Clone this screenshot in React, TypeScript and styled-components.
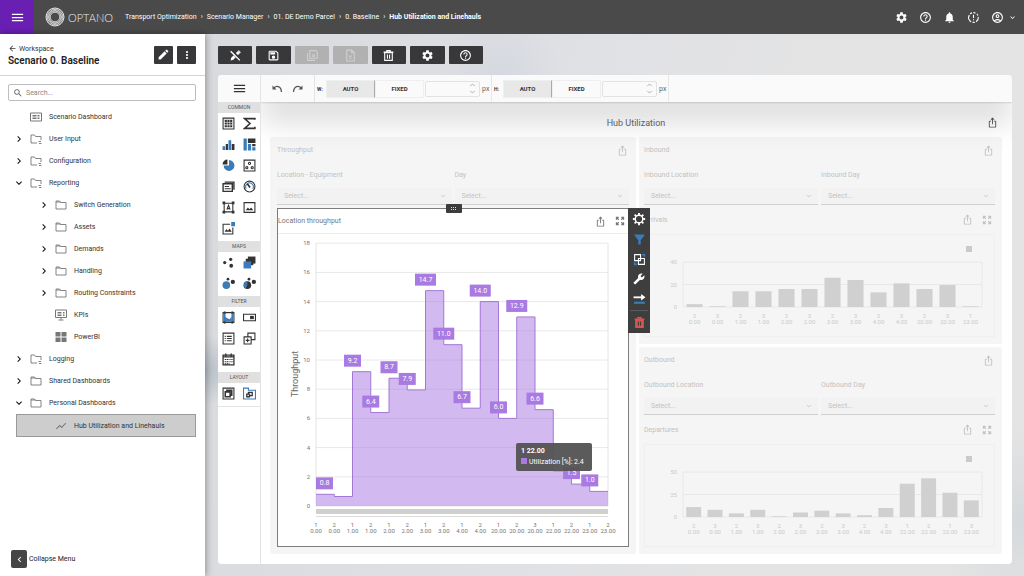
import React from "react";
import styled, { createGlobalStyle, css } from "styled-components";
import {
  MdArrowBack, MdChevronRight, MdEdit, MdExpandMore, MdHelpOutline, MdMenu, MdMoreVert,
  MdNotifications, MdOutlineAccountCircle, MdOutlineSave, MdSearch, MdSettings, MdShowChart,
  MdChevronLeft, MdOutlineIosShare, MdBuild, MdFilterAlt,
} from "react-icons/md";

const color = {
  bar: "#4a4a4a",
  dark: "#38383a",
  brand: "#6a1fb3",
  ink: "#333333",
  blue: "#3b7bb8",
  violet: "#a97be2",
  danger: "#d9534f",
};

const font = { tiny: "5px", small: "6px", base: "7px", head: "9px", title: "10px" };

const GlobalStyle = createGlobalStyle`
  *, *::before, *::after { box-sizing: border-box; }
  body { margin: 0; font-family: Roboto, "Liberation Sans", sans-serif; font-size: ${font.base}; color: ${color.ink}; }
  button, input, select { font: inherit; color: inherit; margin: 0; padding: 0; border: 0; background: none; }
  button { display: inline-flex; align-items: center; justify-content: center; cursor: pointer; }
  a { color: inherit; text-decoration: none; }
  ul, ol { list-style: none; margin: 0; padding: 0; }
  h1, h2, h3 { margin: 0; font-weight: 400; }
  svg { display: block; flex: none; }
`;

/* ---------- page frame ---------- */

const Page = styled.div`
  display: flex;
  flex-direction: column;
  min-height: 100vh;
`;

const Header = styled.header`
  display: flex;
  align-items: center;
  height: 34px;
  background: ${color.bar};
  color: #fff;
`;

const MenuButton = styled.button`
  width: 34px;
  height: 34px;
  background: ${color.brand};
`;

const Brand = styled.a`
  display: flex;
  align-items: center;
  gap: 3px;
  margin-left: 11px;
  width: 80px;
  font-family: Lato, sans-serif;
  font-size: 11px;
  font-weight: 300;
  color: #ececec;
`;

const Crumbs = styled.nav`
  color: #fff;
  ol { display: flex; gap: 4px; }
  li { display: flex; gap: 4px; white-space: nowrap; }
`;

const HeaderActions = styled.div`
  display: flex;
  align-items: center;
  gap: 11px;
  margin-left: auto;
  padding-right: 7px;
`;

const Account = styled.button`
  gap: 4px;
`;

const Body = styled.div`
  display: flex;
  flex: 1;
`;

/* ---------- sidebar ---------- */

const Sidebar = styled.aside`
  position: relative;
  z-index: 1;
  display: flex;
  flex-direction: column;
  width: 205px;
  flex: none;
  background: #fff;
  box-shadow: 1px 0 7px rgba(0, 0, 0, 0.35);
`;

const SideHead = styled.div`
  display: flex;
  align-items: center;
  gap: 4px;
  height: 42px;
  padding: 0 9px 0 8px;
  border-bottom: 1px solid #d4d4d4;
`;

const SideTitle = styled.div`
  display: flex;
  flex-direction: column;
  gap: 1px;
  margin-right: auto;
  padding-top: 1px;
  h1 { font-size: ${font.title}; line-height: 12px; font-weight: 600; color: #222; }
  a { display: flex; align-items: center; gap: 2px; line-height: 10px; }
`;

const SquareButton = styled.button`
  width: 19px;
  height: 18px;
  border-radius: 1px;
  background: ${color.dark};
  color: #fff;
`;

const Search = styled.label`
  display: flex;
  align-items: center;
  gap: 3px;
  height: 17px;
  margin: 8px 9px 5px 8px;
  padding: 0 4px;
  border: 1px solid #bdbdbd;
  border-radius: 2px;
  color: #666;
  input { flex: 1; min-width: 0; outline: 0; }
  input::placeholder { color: #888; opacity: 1; }
`;

const TreeRow = styled.a<{ $level: number; $active?: boolean }>`
  display: flex;
  align-items: center;
  height: 22px;
  padding-left: ${(p) => 13 + 25 * p.$level}px;
  color: #333;
  ${(p) =>
    p.$active &&
    css`
      height: 23px;
      margin: 0 9px 0 16px;
      padding-left: 21px;
      background: #cdcdcd;
      border: 1px solid #999;
    `}
`;

const TreeArrow = styled.span`
  width: 12px;
  margin-right: 5px;
  color: #111;
`;

const TreeIcon = styled.span`
  width: 12px;
  margin-right: 7px;
  color: #777;
`;

const Collapse = styled.button`
  align-self: flex-start;
  gap: 2px;
  margin: auto 0 8px 11px;
  color: #222;
`;

const CollapseIcon = styled.span`
  display: grid;
  place-items: center;
  width: 16px;
  height: 18px;
  border-radius: 2px;
  background: #454545;
  color: #fff;
`;

/* ---------- workspace ---------- */

const Main = styled.main`
  display: flex;
  flex: 1;
  flex-direction: column;
  gap: 11px;
  min-width: 0;
  padding: 12px 12px 12px 13px;
  background:
    radial-gradient(circle at 0% 62%, rgba(150, 165, 180, 0.55), transparent 4%),
    radial-gradient(circle at 36% 8%, rgba(203, 209, 220, 0.5), transparent 9%),
    radial-gradient(circle at 100% 90%, rgba(200, 207, 212, 0.5), transparent 10%),
    linear-gradient(100deg, #d9dadd 0%, #e0e1e5 45%, #e4e4e4 70%);
`;

const ActionBar = styled.div`
  display: grid;
  grid-template-columns: repeat(7, 1fr);
  gap: 4px;
  width: 265px;
`;

const ActionButton = styled.button`
  height: 18px;
  border-radius: 1px;
  background: ${color.dark};
  color: #fff;
  &:disabled { background: #b1b1b2; color: #cfcfcf; cursor: default; }
`;

const Editor = styled.section`
  display: flex;
  flex: 1;
  border-radius: 4px;
  overflow: hidden;
  background: #fff;
`;

const Palette = styled.div`
  position: relative;
  z-index: 2;
  width: 43px;
  flex: none;
  background: #fff;
  border-right: 1px solid #e4e4e4;
`;

const PaletteToggle = styled.button`
  width: 100%;
  height: 27px;
  background: #fafafa;
`;

const PaletteTitle = styled.h2`
  height: 11px;
  background: #e0e0e0;
  color: #555;
  font-size: ${font.tiny};
  line-height: 11px;
  text-align: center;
`;

const PaletteGrid = styled.div`
  display: grid;
  grid-template-columns: 1fr 1fr;
  grid-auto-rows: 21px;
  padding-bottom: 2px;
`;

const PaletteEnd = styled.div`
  border-bottom: 1px solid #e4e4e4;
`;

const Work = styled.div`
  display: flex;
  flex: 1;
  flex-direction: column;
  min-width: 0;
`;

const SizeBar = styled.div`
  position: relative;
  z-index: 1;
  display: flex;
  align-items: stretch;
  height: 27px;
  background: #fafafa;
  border-radius: 0 4px 0 0;
  box-shadow: 0 1px 2px rgba(0, 0, 0, 0.14), 0 18px 30px rgba(0, 0, 0, 0.17);
`;

const History = styled.div`
  display: flex;
  align-items: center;
  gap: 9px;
  width: 54px;
  padding-left: 10px;
  border-right: 1px solid #e4e4e4;
  color: #555;
`;

const SizeField = styled.fieldset`
  display: flex;
  align-items: center;
  width: 177px;
  min-width: 0;
  margin: 0;
  padding: 0 0 0 2px;
  border: 0;
  border-right: 1px solid #e8e8e8;
  color: #666;
`;

const SizeName = styled.span`
  width: 9px;
  font-size: ${font.tiny};
  font-weight: 700;
  color: #333;
`;

const Mode = styled.button<{ $on?: boolean }>`
  width: 49px;
  height: 18px;
  font-size: ${font.small};
  font-weight: 700;
  color: #333;
  border: 1px solid #efefef;
  ${(p) => p.$on && css`background: #e8e8e8; border-right-color: #aaa;`}
`;

const NumberBox = styled.label`
  display: flex;
  align-items: center;
  gap: 2px;
  margin-left: 1px;
`;

const NumberFrame = styled.span`
  display: flex;
  align-items: center;
  width: 55px;
  height: 16px;
  padding-right: 1px;
  border: 1px solid #e2e2e2;
  border-radius: 2px;
  color: #999;
  input { flex: 1; min-width: 0; }
`;

const Canvas = styled.div`
  flex: 1;
  padding: 0 10px 8px 9px;
`;

const CanvasHead = styled.div`
  display: grid;
  grid-template-columns: 1fr auto 1fr;
  align-items: center;
  height: 35px;
  padding: 6px 4px 0;
  h2 { grid-column: 2; font-size: ${font.head}; color: #666; }
  button { justify-self: end; color: #555; }
`;

const Columns = styled.div`
  display: grid;
  grid-template-columns: 366fr 363fr;
  gap: 3px;
`;

const Column = styled.div`
  display: flex;
  flex-direction: column;
  gap: 3px;
  min-width: 0;
`;

const Group = styled.section<{ $left: number }>`
  padding: 0 7px 7px ${(p) => p.$left}px;
  background: #f5f5f5;
  color: #c2c2c2;
  border-radius: 2px;
`;

const GroupHead = styled.div`
  display: flex;
  align-items: center;
  justify-content: space-between;
  height: 26px;
  padding-right: 1px;
`;

const Filters = styled.div`
  display: grid;
  grid-template-columns: 1fr 1fr;
  gap: 3px;
`;

const Filter = styled.label`
  display: block;
  line-height: 25px;
`;

const SelectFrame = styled.span`
  display: flex;
  align-items: center;
  height: 17px;
  padding-right: 5px;
  background: #f2f2f2;
  border-bottom: 1px solid #cfcfcf;
  select { flex: 1; min-width: 0; appearance: none; padding-left: 7px; opacity: 1; }
`;

const ChartHead = styled.div`
  display: flex;
  align-items: center;
  height: 29px;
  padding-right: 3px;
  h3 { margin-right: auto; font-size: ${font.base}; }
`;

const ChartTools = styled.div`
  display: flex;
  align-items: center;
  gap: 9px;
`;

const ChartCard = styled.div`
  border: 1px solid #efefef;
  svg { width: 100%; height: auto; }
`;

const Widget = styled.section`
  position: relative;
  margin: 3px 0 0;
  background: #fff;
  border: 1px solid #7d7d7d;
  color: #777;
`;

const WidgetHead = styled(ChartHead)`
  height: 25px;
  border-bottom: 1px solid #ececec;
`;

const Grip = styled.button`
  position: absolute;
  top: -5px;
  left: 48%;
  width: 16px;
  height: 9px;
  border-radius: 1px;
  background: #3c3c3c;
`;

const WidgetTools = styled.div`
  position: absolute;
  top: -1px;
  left: 100%;
  z-index: 1;
  display: flex;
  flex-direction: column;
  width: 22px;
  padding: 1px 2px;
  background: #3e3e3e;
  color: #fff;
  button { height: 20px; }
  hr { width: 100%; margin: 1px 0; border: 0; border-top: 1px solid #5c5c5c; }
`;

const DangerTool = styled.button`
  color: ${color.danger};
`;

const Plot = styled.div`
  position: relative;
  > svg { width: 100%; height: auto; }
`;

const Tooltip = styled.div`
  position: absolute;
  top: 67%;
  left: 68%;
  padding: 3px 8px 3px 5px;
  border-radius: 2px;
  background: rgba(84, 84, 84, 0.96);
  color: #fff;
  line-height: 11px;
  white-space: nowrap;
`;

const Swatch = styled.i`
  display: inline-block;
  width: 6px;
  height: 6px;
  margin-right: 2px;
  background: ${color.violet};
`;

/* ---------- drawings ---------- */

type DrawProps = { size?: number; children: React.ReactNode };

const Draw = ({ size = 13, children }: DrawProps) => (
  <svg width={size} height={size} viewBox="0 0 24 24" fill="none" stroke="currentColor" strokeWidth={2} aria-hidden>
    {children}
  </svg>
);

const Logo = () => (
  <svg width="20" height="20" viewBox="0 0 40 40" fill="none" stroke="#e4e4e4" aria-hidden>
    <circle cx="20" cy="20" r="18" strokeWidth="2" />
    <circle cx="20" cy="20" r="15" strokeWidth="1.6" />
    <circle cx="20" cy="20" r="12.4" strokeWidth="1.6" />
    <circle cx="20" cy="20" r="9.6" strokeWidth="1.8" />
    {[0, 45, 90, 135].map((a) => (
      <ellipse key={a} cx="20" cy="20" rx="17.5" ry="11.5" strokeWidth="0.7" transform={`rotate(${a} 20 20)`} />
    ))}
  </svg>
);

const AlertRing = () => (
  <Draw>
    <circle cx="12" cy="12" r="9" strokeDasharray="10 2.5 4 2.5 4 2.5 4 2.5 10 2.5 4 2.5 4 2" transform="rotate(145 12 12)" />
    <path d="M12 7v6M12 15v2" />
  </Draw>
);

const Folder = ({ linked }: { linked?: boolean }) => (
  <Draw size={12}>
    {linked ? (
      <>
        <path d="M14 20H2V4h7l2 3h11v7" strokeWidth={1.8} />
        <path d="M17 17h5M18 21h5" strokeWidth={1.8} />
      </>
    ) : (
      <path d="M2 4h7l2 3h11v13H2zM2 6h9" strokeWidth={1.8} />
    )}
  </Draw>
);

const DashboardIcon = () => (
  <Draw size={12}>
    <path d="M1 4h22v16H1z" />
    <path d="M5 9h8M5 12h8M5 15h8M15 9h4M15 12h4M15 15h4" />
  </Draw>
);

const MonitorIcon = () => (
  <Draw size={12}>
    <path d="M1 2h22v15H1zM12 17v4M7 22h10" />
    <path d="M5 7h8M5 10h8M5 13h8M16 7h3M16 10h3M16 13h3" />
  </Draw>
);

const TilesIcon = () => (
  <Draw size={12}>
    <path d="M1 2h10v9H1zM13 2h10v9H13zM1 13h10v9H1zM13 13h10v9H13z" fill="currentColor" stroke="none" />
  </Draw>
);

const DesignOff = () => (
  <Draw>
    <path d="M3 21l1-5L16 4l4 4L8 20z" fill="currentColor" stroke="none" />
    <path d="M17 3l4 4" strokeWidth={2.6} />
    <path d="M4 3l17 17" stroke={color.dark} strokeWidth={6} />
    <path d="M3 4l17 17" strokeWidth={2.6} />
  </Draw>
);

const SaveCopy = () => (
  <Draw>
    <path d="M7 3h11l3 3v11H7zM3 7v14h14" />
    <circle cx="14" cy="12" r="2" />
  </Draw>
);

const FileX = () => (
  <Draw>
    <path d="M5 2h9l5 5v15H5zM14 2v5h5M9 12l5 6M14 12l-5 6" />
  </Draw>
);

const Bin = ({ filled }: { filled?: boolean }) => (
  <Draw>
    <path d="M3 6h18M9 5V3h6v2" strokeWidth={2.4} />
    <path d="M5 7h14v14H5z" fill={filled ? "currentColor" : "none"} />
    <path d="M10 10v8M14 10v8" stroke={filled ? "#3e3e3e" : "currentColor"} />
  </Draw>
);

const Expand = () => (
  <Draw size={10}>
    <path
      d="M2 2h7v3H7l3 3-2 2-3-3v2H2zM22 2v7h-3V7l-3 3-2-2 3-3h-2V2zM22 22h-7v-3h2l-3-3 2-2 3 3v-2h3zM2 22v-7h3v2l3-3 2 2-3 3h2v3z"
      fill="currentColor"
      stroke="none"
    />
  </Draw>
);

const Undo = ({ flip }: { flip?: boolean }) => (
  <Draw size={12}>
    <g transform={flip ? "matrix(-1 0 0 1 24 0)" : undefined}>
      <path d="M3 5v8h8z" fill="currentColor" stroke="none" />
      <path d="M6 10C10 5 20 5 21 18" strokeWidth={2.6} />
    </g>
  </Draw>
);

const GearOutline = () => (
  <Draw size={14}>
    <circle cx="12" cy="12" r="6.5" strokeWidth={2.4} />
    {[0, 45, 90, 135, 180, 225, 270, 315].map((a) => (
      <path key={a} d="M12 1.5v3.5" strokeWidth={3.2} transform={`rotate(${a} 12 12)`} />
    ))}
  </Draw>
);

const CopyTool = () => (
  <Draw>
    <path d="M3 3h11v11H3zM10 10h11v11H10z" />
    <path d="M17 3h4v4M3 17v4h4" stroke={color.blue} strokeWidth={3} />
  </Draw>
);

const SwapTool = () => (
  <Draw>
    <path d="M1 8h16" strokeWidth={3.4} />
    <path d="M15 2l8 6-8 6z" fill="currentColor" stroke="none" />
    <path d="M2 18h20" stroke={color.blue} strokeWidth={4} />
  </Draw>
);

const b = color.blue;
const solid = { fill: "currentColor", stroke: "none" };
const blueFill = { fill: b, stroke: "none" };

type PaletteItem = { name: string; art: React.ReactNode };

const paletteSections: { title: string; items: PaletteItem[] }[] = [
  {
    title: "COMMON",
    items: [
      { name: "Table", art: <><path d="M2 2h20v20H2z" /><path d="M5 5h4v4H5zM10 5h4v4h-4zM15 5h4v4h-4zM5 10h4v4H5zM10 10h4v4h-4zM15 10h4v4h-4zM5 15h4v4H5zM10 15h4v4h-4zM15 15h4v4h-4z" {...solid} /></> },
      { name: "Sum", art: <path d="M22 5V3H3l10 9-10 9h19v-3" strokeWidth={2.8} /> },
      { name: "Bar chart", art: <><path d="M7 11h4v11H7zM18 11h5v11h-5z" {...solid} /><path d="M1 15h5v7H1zM12 4h5v18h-5z" {...blueFill} /></> },
      { name: "Tree map", art: <><path d="M9 1h14v8H9zM17 11h6v4h-6z" {...solid} /><path d="M1 1h6v22H1zM9 11h6v12H9zM17 17h6v6h-6z" {...blueFill} /></> },
      { name: "Pie chart", art: <><path d="M13 2a10 10 0 1 1-10 10h10z" {...blueFill} /><path d="M10 1v9H1a9 9 0 0 1 9-9z" {...solid} /></> },
      { name: "Scatter chart", art: <><path d="M2 2h20v20H2z" /><circle cx="7" cy="16" r="2" /><circle cx="12" cy="8" r="2" /><circle cx="17" cy="16" r="2" /></> },
      { name: "Cards", art: <><path d="M2 7h17v14H2zM5 4h17v14" strokeWidth={2.6} /><path d="M5 12h8M5 16h11" /></> },
      { name: "Gauge", art: <><circle cx="12" cy="12" r="10" /><path d="M6 16a7 7 0 1 1 12 0" stroke={b} /><path d="M8 7l5 7" strokeWidth={3} /></> },
      { name: "Text", art: <><path d="M4 4h16v16H4z" /><path d="M1 1h5v5H1zM18 1h5v5h-5zM1 18h5v5H1zM18 18h5v5h-5z" {...solid} /><path d="M9 16l3-8 3 8M10 14h4" /></> },
      { name: "Image", art: <><path d="M2 3h20v18H2z" /><path d="M5 17l4-5 3 3 3-3 4 5z" {...solid} /></> },
      { name: "Dynamic image", art: <><path d="M15 4H2v18h18V10" /><path d="M5 18l3-5 3 3 3-4 4 6z" {...solid} /><path d="M17 0h7v8h-7z" {...blueFill} /></> },
    ],
  },
  {
    title: "MAPS",
    items: [
      { name: "Points", art: <><circle cx="5" cy="12" r="3" {...solid} /><circle cx="16" cy="6" r="3" {...solid} /><circle cx="17" cy="18" r="3.5" {...solid} /></> },
      { name: "Layers", art: <><path d="M9 1h14v13H9z" {...solid} /><path d="M5 5h14v12H5z" {...solid} /><path d="M1 10h14v13H1z" {...blueFill} /></> },
      { name: "Bubbles", art: <><circle cx="8" cy="15" r="7" {...blueFill} /><circle cx="20" cy="9" r="4" {...solid} /><circle cx="11" cy="4" r="2.5" {...solid} /></> },
      { name: "Pie bubbles", art: <><circle cx="8" cy="15" r="7" {...solid} /><path d="M8 15V8a7 7 0 0 0-3 13z" {...blueFill} /><circle cx="20" cy="9" r="4" {...solid} /><circle cx="11" cy="4" r="2.5" {...solid} /></> },
    ],
  },
  {
    title: "FILTER",
    items: [
      { name: "Range filter", art: <><path d="M2 3h20v18H2z" /><path d="M5 20V10l4 3 5 2 4-5v10z" {...blueFill} /><path d="M5 1v22M19 1v22" stroke={b} strokeWidth={3} /><path d="M3 3h4M3 21h4M17 3h4M17 21h4" strokeWidth={3} /></> },
      { name: "Drop-down", art: <><path d="M1 6h22v12H1z" /><path d="M13 9h7v6h-7z" {...solid} /></> },
      { name: "List", art: <><path d="M2 2h20v20H2z" /><path d="M9 8h9M9 12h9M9 16h9M5 8h2M5 12h2M5 16h2" /></> },
      { name: "Tree filter", art: <><path d="M9 8V2h13v12h-6M2 9h13v13H2zM8.5 12v7M5 15.5h7" /></> },
      { name: "Date filter", art: <><path d="M2 4h20v18H2zM2 7h20M7 1v5M17 1v5" strokeWidth={2.4} /><path d="M5 12h9M5 16h9M5 20h9" strokeDasharray="3 1" /><path d="M15 12h5M15 16h5" stroke={b} /></> },
    ],
  },
  {
    title: "LAYOUT",
    items: [
      { name: "Group", art: <><path d="M2 2h20v20H2z" /><path d="M6 9h9v9H6zM9 9V6h9v9h-3" strokeWidth={2.8} /></> },
      { name: "Tab container", art: <><path d="M1 2h9v4h13v16H1z" stroke={b} /><path d="M7 13h5v5H7zM10 12v-2h7v6h-4" strokeWidth={2.4} /></> },
    ],
  },
];

/* ---------- charts ---------- */

const stepValues = [0.8, 0.65, 9.2, 6.4, 8.75, 7.95, 14.75, 11.05, 6.7, 14, 6, 12.95, 6.6, 2.4, 1.5, 1];
const stepBadges = ["0.8", "", "9.2", "6.4", "8.7", "7.9", "14.7", "11.0", "6.7", "14.0", "6.0", "12.9", "6.6", "", "1.5", "1.0"];
const stepTicks = [
  "1 0.00", "2 0.00", "1 1.00", "2 1.00", "1 2.00", "2 2.00", "1 3.00", "2 3.00", "1 4.00", "2 4.00",
  "1 20.00", "2 20.00", "3 20.00", "1 22.00", "2 22.00", "1 23.00", "2 23.00",
];

const AxisTick = ({ x, y, label }: { x: number; y: number; label: string }) => {
  const [top, bottom] = label.split(" ");
  return (
    <>
      <text x={x} y={y} textAnchor="middle">{top}</text>
      <text x={x} y={y + 6} textAnchor="middle">{bottom}</text>
    </>
  );
};

const StepChart = () => {
  const left = 38;
  const right = 330;
  const base = 272;
  const unit = 14.6;
  const step = (right - left) / stepValues.length;
  const outline = stepValues
    .map((v, i) => `${i ? "L" : "M"}${left + i * step} ${base - v * unit}H${left + (i + 1) * step}`)
    .join("");
  return (
    <svg viewBox="0 0 350 312" fontSize="6" fill="#777" role="img" aria-label="Location throughput">
      {Array.from({ length: 10 }, (_, i) => i * 2).map((v) => (
        <g key={v}>
          <path d={`M${left} ${base - v * unit}H${right}`} stroke="#e8e8e8" />
          <text x={left - 6} y={base - v * unit + 2} textAnchor="end">{v}</text>
        </g>
      ))}
      <path d={`M${left} ${base}V${base - 18 * unit}M${right} ${base}V${base - 18 * unit}`} stroke="#e4e4e4" />
      <path d={`${outline}V${base}H${left}Z`} fill={color.violet} fillOpacity="0.52" />
      <path d={outline} fill="none" stroke="#a377d6" />
      {stepBadges.map((text, i) => {
        if (!text) return null;
        const w = text.length > 3 ? 21 : 17;
        const cx = Math.max(left + i * step, left + w / 2);
        const cy = base - stepValues[i] * unit - 11;
        return (
          <g key={i}>
            <rect x={cx - w / 2} y={cy - 6} width={w} height="12" fill={color.violet} />
            <text x={cx} y={cy + 2} fontSize="7" fill="#fff" textAnchor="middle">{text}</text>
          </g>
        );
      })}
      <rect x={left} y={base + 3} width={right - left} height="5" fill="#d0d0ce" />
      <path d={`M${left} 282.5H${right}`} stroke="#dcdcdc" />
      {stepTicks.map((t, i) => (
        <AxisTick key={t} x={left + i * step} y={293} label={t} />
      ))}
      <text transform="translate(20 140) rotate(-90)" fontSize="9" fill="#666" textAnchor="middle">Throughput</text>
    </svg>
  );
};

type BarData = { label: string; max: number; values: number[]; ticks: string[] };

const arrivals: BarData = {
  label: "Arrivals",
  max: 40,
  values: [2.5, 0.6, 14, 14, 16, 16, 26, 24, 13, 21, 16, 19.5, 0.6],
  ticks: ["2 0.00", "3 0.00", "2 1.00", "3 1.00", "2 2.00", "3 2.00", "2 3.00", "3 3.00", "2 4.00", "3 4.00", "2 20.00", "3 20.00", "1 23.00"],
};

const departures: BarData = {
  label: "Departures",
  max: 50,
  values: [11, 8, 4, 8, 0.8, 5, 7, 4, 2, 10, 37, 43, 27, 18.5],
  ticks: ["2 0.00", "3 0.00", "2 1.00", "3 1.00", "2 2.00", "3 2.00", "2 3.00", "3 3.00", "2 4.00", "3 4.00", "1 22.00", "2 22.00", "1 23.00", "3 23.00"],
};

const BarChart = ({ data }: { data: BarData }) => {
  const left = 38;
  const right = 337;
  const top = 27;
  const base = 72;
  const step = (right - left) / data.values.length;
  return (
    <svg viewBox="0 0 349 101" fontSize="6" fill="#cacaca" role="img" aria-label={data.label}>
      <rect x="321" y="11" width="6" height="6" />
      {[0, 0.5, 1].map((f) => {
        const y = base - f * (base - top);
        return (
          <g key={f}>
            <path d={`M${left} ${y}H${right}`} stroke="#e8e8e8" />
            <text x={left - 6} y={y + 2} textAnchor="end">{f * data.max}</text>
          </g>
        );
      })}
      <path d={`M${left} ${base}V${top}M${right} ${base}V${top}`} stroke="#e8e8e8" />
      {data.values.map((v, i) => {
        const h = (v / data.max) * (base - top);
        const w = step * 0.7;
        return <rect key={i} x={left + (i + 0.5) * step - w / 2} y={base - h} width={w} height={h} fill="#d0d0d0" />;
      })}
      {data.ticks.map((t, i) => (
        <AxisTick key={i} x={left + (i + 0.5) * step} y={83} label={t} />
      ))}
    </svg>
  );
};

/* ---------- parts ---------- */

type TreeNode = { name: string; level: number; icon: React.ReactNode; arrow?: "open" | "closed"; active?: boolean };

const tree: TreeNode[] = [
  { name: "Scenario Dashboard", level: 0, icon: <DashboardIcon /> },
  { name: "User Input", level: 0, icon: <Folder linked />, arrow: "closed" },
  { name: "Configuration", level: 0, icon: <Folder linked />, arrow: "closed" },
  { name: "Reporting", level: 0, icon: <Folder linked />, arrow: "open" },
  { name: "Switch Generation", level: 1, icon: <Folder />, arrow: "closed" },
  { name: "Assets", level: 1, icon: <Folder />, arrow: "closed" },
  { name: "Demands", level: 1, icon: <Folder />, arrow: "closed" },
  { name: "Handling", level: 1, icon: <Folder />, arrow: "closed" },
  { name: "Routing Constraints", level: 1, icon: <Folder />, arrow: "closed" },
  { name: "KPIs", level: 1, icon: <MonitorIcon /> },
  { name: "PowerBI", level: 1, icon: <TilesIcon /> },
  { name: "Logging", level: 0, icon: <Folder linked />, arrow: "closed" },
  { name: "Shared Dashboards", level: 0, icon: <Folder />, arrow: "closed" },
  { name: "Personal Dashboards", level: 0, icon: <Folder />, arrow: "open" },
  { name: "Hub Utilization and Linehauls", level: 1, icon: <MdShowChart size={12} />, active: true },
];

const ShareButton = ({ of }: { of: string }) => (
  <button aria-label={`Share ${of}`}><MdOutlineIosShare size={11} /></button>
);

const SelectFilter = ({ label }: { label: string }) => (
  <Filter>
    {label}
    <SelectFrame>
      <select defaultValue=""><option value="">Select...</option></select>
      <MdExpandMore size={8} />
    </SelectFrame>
  </Filter>
);

const Size = ({ name, label }: { name: string; label: string }) => (
  <SizeField aria-label={label}>
    <SizeName>{name}</SizeName>
    <Mode $on>AUTO</Mode>
    <Mode>FIXED</Mode>
    <NumberBox>
      <NumberFrame>
        <input type="text" inputMode="numeric" aria-label={`${label} in pixels`} />
        <Draw size={11}><path d="M7 7l5-5 5 5M7 17l5 5 5-5" strokeWidth={1.6} /></Draw>
      </NumberFrame>
      px
    </NumberBox>
  </SizeField>
);

const FlowGroup = ({ name, data }: { name: string; data: BarData }) => (
  <Group $left={5}>
    <GroupHead>{name}<ShareButton of={name} /></GroupHead>
    <Filters>
      <SelectFilter label={`${name} Location`} />
      <SelectFilter label={`${name} Day`} />
    </Filters>
    <ChartHead>
      <h3>{data.label}</h3>
      <ChartTools>
        <ShareButton of={data.label} />
        <button aria-label={`Expand ${data.label}`}><Expand /></button>
      </ChartTools>
    </ChartHead>
    <ChartCard><BarChart data={data} /></ChartCard>
  </Group>
);

export default function App() {
  const crumbs = ["Transport Optimization", "Scenario Manager", "01. DE Demo Parcel", "0. Baseline"];
  return (
    <Page>
      <GlobalStyle />
      <Header>
        <MenuButton aria-label="Menu"><MdMenu size={15} /></MenuButton>
        <Brand href="#"><Logo />OPTANO</Brand>
        <Crumbs aria-label="Breadcrumb">
          <ol>
            {crumbs.map((c) => <li key={c}><a href="#">{c}</a><span>›</span></li>)}
            <li><b>Hub Utilization and Linehauls</b></li>
          </ol>
        </Crumbs>
        <HeaderActions>
          <button aria-label="Settings"><MdSettings size={13} /></button>
          <button aria-label="Help"><MdHelpOutline size={13} /></button>
          <button aria-label="Notifications"><MdNotifications size={13} /></button>
          <button aria-label="Status"><AlertRing /></button>
          <Account aria-label="Account"><MdOutlineAccountCircle size={13} /><MdExpandMore size={9} /></Account>
        </HeaderActions>
      </Header>
      <Body>
        <Sidebar>
          <SideHead>
            <SideTitle>
              <a href="#"><MdArrowBack size={9} />Workspace</a>
              <h1>Scenario 0. Baseline</h1>
            </SideTitle>
            <SquareButton aria-label="Edit scenario"><MdEdit size={13} /></SquareButton>
            <SquareButton aria-label="More"><MdMoreVert size={12} /></SquareButton>
          </SideHead>
          <Search>
            <MdSearch size={10} />
            <input type="search" placeholder="Search..." aria-label="Search" />
          </Search>
          <nav aria-label="Scenario">
            <ul>
              {tree.map((n) => (
                <li key={n.name}>
                  <TreeRow href="#" $level={n.level} $active={n.active}>
                    <TreeArrow>
                      {n.arrow === "closed" && <MdChevronRight size={12} />}
                      {n.arrow === "open" && <MdExpandMore size={12} />}
                    </TreeArrow>
                    <TreeIcon>{n.icon}</TreeIcon>
                    {n.name}
                  </TreeRow>
                </li>
              ))}
            </ul>
          </nav>
          <Collapse><CollapseIcon><MdChevronLeft size={11} /></CollapseIcon>Collapse Menu</Collapse>
        </Sidebar>
        <Main>
          <ActionBar>
            <ActionButton aria-label="Leave design mode"><DesignOff /></ActionButton>
            <ActionButton aria-label="Save"><MdOutlineSave size={13} /></ActionButton>
            <ActionButton aria-label="Save a copy" disabled><SaveCopy /></ActionButton>
            <ActionButton aria-label="Discard" disabled><FileX /></ActionButton>
            <ActionButton aria-label="Delete"><Bin /></ActionButton>
            <ActionButton aria-label="Settings"><MdSettings size={13} /></ActionButton>
            <ActionButton aria-label="Help"><MdHelpOutline size={13} /></ActionButton>
          </ActionBar>
          <Editor>
            <Palette>
              <PaletteToggle aria-label="Toggle palette"><MdMenu size={15} /></PaletteToggle>
              <PaletteEnd>
                {paletteSections.map((s) => (
                  <section key={s.title}>
                    <PaletteTitle>{s.title}</PaletteTitle>
                    <PaletteGrid>
                      {s.items.map((i) => (
                        <button key={i.name} aria-label={i.name}><Draw size={13}>{i.art}</Draw></button>
                      ))}
                    </PaletteGrid>
                  </section>
                ))}
              </PaletteEnd>
            </Palette>
            <Work>
              <SizeBar>
                <History>
                  <button aria-label="Undo"><Undo /></button>
                  <button aria-label="Redo"><Undo flip /></button>
                </History>
                <Size name="W:" label="Width" />
                <Size name="H:" label="Height" />
              </SizeBar>
              <Canvas>
                <CanvasHead>
                  <h2>Hub Utilization</h2>
                  <ShareButton of="dashboard" />
                </CanvasHead>
                <Columns>
                  <Group $left={7}>
                    <GroupHead>Throughput<ShareButton of="Throughput" /></GroupHead>
                    <Filters>
                      <SelectFilter label="Location - Equipment" />
                      <SelectFilter label="Day" />
                    </Filters>
                    <Widget>
                      <Grip aria-label="Move widget">
                        <svg width="8" height="5" viewBox="0 0 8 5" fill="#ddd" aria-hidden>
                          <path d="M1 1h1v1H1zM3 1h1v1H3zM5 1h1v1H5zM1 3h1v1H1zM3 3h1v1H3zM5 3h1v1H5z" />
                        </svg>
                      </Grip>
                      <WidgetHead>
                        <h3>Location throughput</h3>
                        <ChartTools>
                          <ShareButton of="Location throughput" />
                          <button aria-label="Expand Location throughput"><Expand /></button>
                        </ChartTools>
                      </WidgetHead>
                      <Plot>
                        <StepChart />
                        <Tooltip role="tooltip">
                          <b>1 22.00</b>
                          <div><Swatch />Utilization [%]: 2.4</div>
                        </Tooltip>
                      </Plot>
                      <WidgetTools>
                        <button aria-label="Widget settings"><GearOutline /></button>
                        <button aria-label="Widget filter"><MdFilterAlt size={15} color={color.blue} /></button>
                        <button aria-label="Duplicate widget"><CopyTool /></button>
                        <button aria-label="Configure widget"><MdBuild size={12} transform="scale(-1 1)" /></button>
                        <button aria-label="Swap widget"><SwapTool /></button>
                        <hr />
                        <DangerTool aria-label="Delete widget"><Bin filled /></DangerTool>
                      </WidgetTools>
                    </Widget>
                  </Group>
                  <Column>
                    <FlowGroup name="Inbound" data={arrivals} />
                    <FlowGroup name="Outbound" data={departures} />
                  </Column>
                </Columns>
              </Canvas>
            </Work>
          </Editor>
        </Main>
      </Body>
    </Page>
  );
}
